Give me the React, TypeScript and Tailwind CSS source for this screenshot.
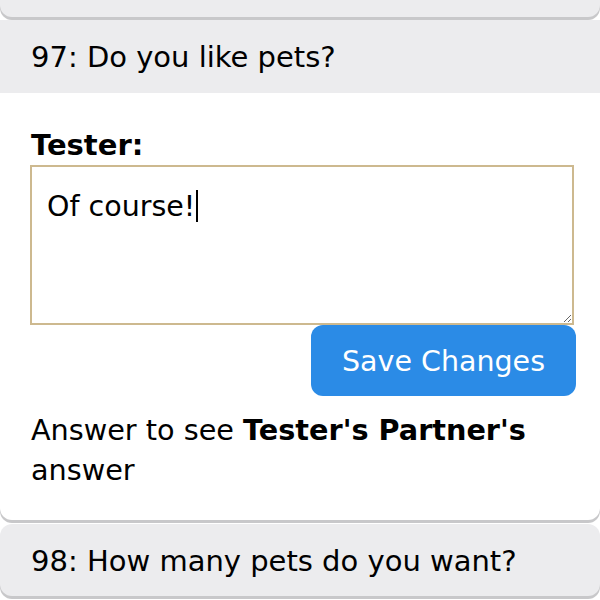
export default function App() {
  return (
    <div className="h-[600px] w-[600px] overflow-hidden bg-white font-['DejaVu_Sans',Verdana,sans-serif] text-black">
      {/* previous card, only its bottom edge shows */}
      <div className="-mt-[40px] h-[57px] rounded-b-xl bg-[#ececee] shadow-[0_3px_0_#c8c8ca]" />

      <div className="mt-[3px] rounded-xl bg-white shadow-[0_3px_0_#c8c8ca,0_0_1px_#c8c8ca]">
        <div className="flex h-[73px] items-center bg-[#ececee] px-[31px] pt-[2px] text-[29px]">
          97: Do you like pets?
        </div>
        <div className="px-[30px] pt-[36px] pb-[30px]">
          <div className="pl-[1px] text-[29px] font-bold leading-[32px]">Tester:</div>
          <div className="relative mt-[4px]">
            <textarea
              className="block h-[160px] w-[544px] resize-y border-2 border-[#cdb98f] bg-white px-[15px] pt-[20px] pb-[10px] text-[28.5px] leading-[40px] outline-none"
              defaultValue="Of course!"
            />
            {/* focused caret */}
            <span className="pointer-events-none absolute top-[25px] left-[166px] h-[32px] w-[2px] bg-black" />
          </div>
          <div className="flex justify-end">
            <button className="-mr-[6px] h-[71px] w-[265px] rounded-xl bg-[#2b8be6] pt-[4px] text-[28.5px] text-white">
              Save Changes
            </button>
          </div>
          <p className="mt-[14px] pl-[1px] text-[28.7px] leading-[40px]">
            Answer to see <b>Tester's Partner's</b> answer
          </p>
        </div>
      </div>

      <div className="mt-[4px] flex h-[72px] items-center rounded-xl bg-[#ececee] px-[31px] pt-[4px] text-[29px] shadow-[0_3px_0_#c8c8ca]">
        98: How many pets do you want?
      </div>
    </div>
  );
}
